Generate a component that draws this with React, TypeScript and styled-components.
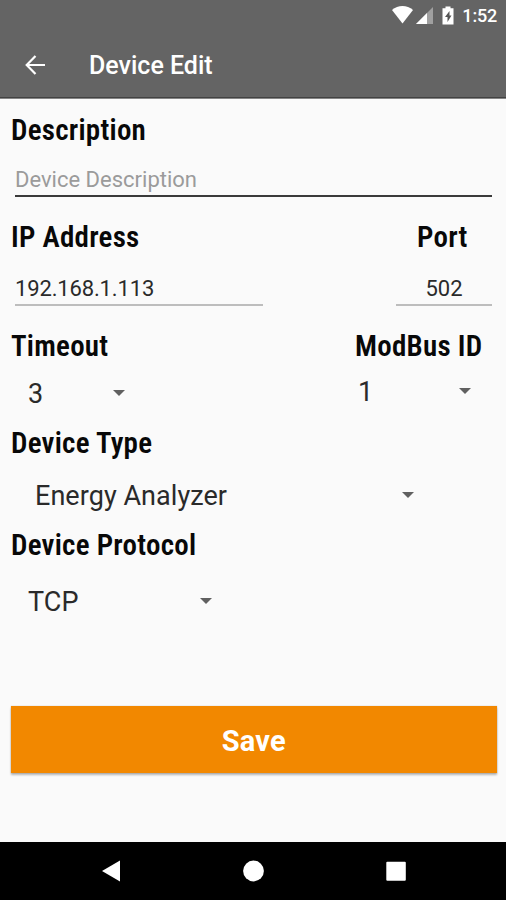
import React from 'react';
import styled, { createGlobalStyle } from 'styled-components';

const GlobalStyle = createGlobalStyle`
  * { box-sizing: border-box; }
  body { margin: 0; background: #fafafa; font-family: Roboto, sans-serif; }
`;

const Screen = styled.div`
  width: 506px;
  height: 900px;
  display: flex;
  flex-direction: column;
  background: #fafafa;
  overflow: hidden;
`;

const StatusBar = styled.div`
  height: 32px;
  flex: none;
  display: flex;
  align-items: center;
  justify-content: flex-end;
  padding-right: 9px;
  background: #646464;
  color: #fff;
`;

const StatusIcons = styled.svg`
  display: block;
  margin: 0 5px 2px 0;
`;

const Clock = styled.span`
  font-size: 18px;
  font-weight: 500;
  line-height: 32px;
  letter-spacing: -0.2px;
`;

const AppBar = styled.header`
  height: 66px;
  flex: none;
  display: flex;
  align-items: center;
  gap: 43px;
  padding-left: 25px;
  background: #646464;
  border-bottom: 1px solid #424242;
  color: #fff;
`;

const BackButton = styled.button`
  display: flex;
  padding: 0;
  border: 0;
  background: none;
  color: inherit;
`;

const Title = styled.h1`
  margin: 0;
  padding-top: 3px;
  font-size: 25px;
  font-weight: 500;
  line-height: 30px;
`;

const Form = styled.main`
  flex: 1;
  display: flex;
  flex-direction: column;
  padding: 15px 9px 0 11px;
  border-top: 1px solid #858585;
`;

const FieldRow = styled.div<{ $height: number }>`
  height: ${p => p.$height}px;
  flex: none;
  display: flex;
  justify-content: space-between;
`;

const Field = styled.div<{ $width?: number }>`
  width: ${p => (p.$width ? `${p.$width}px` : '100%')};
  display: flex;
  flex-direction: column;
`;

const Label = styled.label<{ $indent?: number }>`
  padding-left: ${p => p.$indent ?? 0}px;
  font-family: 'Roboto Condensed', Roboto, sans-serif;
  font-stretch: 75%;
  font-size: 29px;
  font-weight: 600;
  line-height: 33px;
  letter-spacing: 0.25px;
  white-space: nowrap;
  color: #080808;
`;

const Input = styled.input<{ $active?: boolean; $centered?: boolean; $top: number; $tracking?: number }>`
  height: 37px;
  margin: ${p => p.$top}px 5px 0 4px;
  padding: 3px 0 0;
  border: 0;
  border-bottom: 2px solid ${p => (p.$active ? '#3a3a3a' : '#bdbdbd')};
  border-radius: 0;
  outline: 0;
  background: none;
  font-family: Roboto, sans-serif;
  font-size: 22px;
  letter-spacing: ${p => p.$tracking ?? 0}px;
  color: #2a2a2a;
  text-align: ${p => (p.$centered ? 'center' : 'left')};
  &::placeholder { color: #9b9b9b; opacity: 1; }
`;

const Select = styled.div<{ $width: number; $top: number; $indent: number }>`
  width: ${p => p.$width}px;
  height: 34px;
  margin: ${p => p.$top}px 0 0 ${p => p.$indent}px;
  display: flex;
  align-items: center;
  justify-content: space-between;
  font-size: 27px;
  font-weight: 400;
  line-height: 34px;
  letter-spacing: 0.05px;
  color: #2a2a2a;
`;

const Caret = styled.svg`
  display: block;
  margin-bottom: 3px;
`;

const SaveButton = styled.button`
  height: 67px;
  flex: none;
  margin: 75px 0 0 -0.5px;
  padding: 3px 0 0;
  border: 0;
  background: #f28800;
  box-shadow: 0 2px 2px rgba(0, 0, 0, 0.28), 0 0 1px rgba(0, 0, 0, 0.25);
  color: #fff;
  font-family: Roboto, sans-serif;
  font-size: 29px;
  font-weight: 700;
  letter-spacing: 0.2px;
`;

const NavBar = styled.nav`
  height: 58px;
  flex: none;
  background: #000;
`;

const NavIcons = styled.svg`
  display: block;
`;

interface DropdownProps {
  value: string;
  width: number;
  top: number;
  indent: number;
}

const Dropdown = ({ value, width, top, indent }: DropdownProps) => (
  <Select $width={width} $top={top} $indent={indent}>
    <span>{value}</span>
    <Caret width="12" height="6" viewBox="0 0 12 6">
      <path d="M0 0H12L6 6Z" fill="#606060" />
    </Caret>
  </Select>
);

export default function App() {
  return (
    <>
      <GlobalStyle />
      <Screen>
        <StatusBar>
          <StatusIcons width="65" height="20" viewBox="0 0 65 20">
            <path d="M0 5C6-.3 15-.3 21 5L10.500 18.500Z" fill="#fff" />
            <path d="M41 2V19H24Z" fill="#a0a0a0" />
            <path d="M35 8V19H24Z" fill="#fff" />
            <path d="M53.500 1.500h5v1.800h3V19.500h-11V3.300h3Z" fill="#fff" />
            <path d="M57.500 6L53 12H55.500V17L59.500 10.500H57.500Z" fill="#555" />
          </StatusIcons>
          <Clock>1:52</Clock>
        </StatusBar>
        <AppBar>
          <BackButton aria-label="Back">
            <svg width="21" height="20" viewBox="0 0 21 20" fill="none" stroke="currentColor" strokeWidth="2.2">
              <path d="M20 10H2M10.500 1L1.700 10L10.500 19" />
            </svg>
          </BackButton>
          <Title>Device Edit</Title>
        </AppBar>
        <Form>
          <FieldRow $height={107}>
            <Field>
              <Label>Description</Label>
              <Input $active $top={13} placeholder="Device Description" />
            </Field>
          </FieldRow>
          <FieldRow $height={109}>
            <Field $width={257}>
              <Label>IP Address</Label>
              <Input $top={15} $tracking={-0.15} defaultValue="192.168.1.113" />
            </Field>
            <Field $width={105}>
              <Label $indent={25}>Port</Label>
              <Input $top={15} $centered defaultValue="502" />
            </Field>
          </FieldRow>
          <FieldRow $height={97}>
            <Field $width={200}>
              <Label>Timeout</Label>
              <Dropdown value="3" width={97} top={14} indent={17} />
            </Field>
            <Field $width={142}>
              <Label>ModBus ID</Label>
              <Dropdown value="1" width={113} top={12} indent={3} />
            </Field>
          </FieldRow>
          <FieldRow $height={102}>
            <Field>
              <Label>Device Type</Label>
              <Dropdown value="Energy Analyzer" width={379} top={19} indent={24} />
            </Field>
          </FieldRow>
          <FieldRow $height={102}>
            <Field>
              <Label>Device Protocol</Label>
              <Dropdown value="TCP" width={184} top={23} indent={17} />
            </Field>
          </FieldRow>
          <SaveButton>Save</SaveButton>
        </Form>
        <NavBar>
          <NavIcons width="506" height="58" viewBox="0 0 506 58">
            <path d="M102 29L120 18.500V39.500Z" fill="#fff" />
            <circle cx="253.500" cy="29" r="10.400" fill="#fff" />
            <rect x="386.300" y="19.800" width="19.500" height="19" rx="1" fill="#fff" />
          </NavIcons>
        </NavBar>
      </Screen>
    </>
  );
}
